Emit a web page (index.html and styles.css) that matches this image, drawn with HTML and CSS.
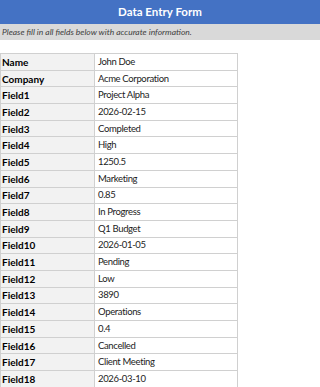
FILE: index.html
```html
<!DOCTYPE html>
<html>
<head>
<meta charset="utf-8">
<link rel="stylesheet" href="styles.css">
</head>
<body>
<div class="title">Data Entry Form</div>
<div class="subtitle">Please fill in all fields below with accurate information.</div>
<table class="form">
<tr><td class="label">Name</td><td class="value">John Doe</td></tr>
<tr><td class="label">Company</td><td class="value">Acme Corporation</td></tr>
<tr><td class="label">Field1</td><td class="value">Project Alpha</td></tr>
<tr><td class="label">Field2</td><td class="value">2026-02-15</td></tr>
<tr><td class="label">Field3</td><td class="value">Completed</td></tr>
<tr><td class="label">Field4</td><td class="value">High</td></tr>
<tr><td class="label">Field5</td><td class="value">1250.5</td></tr>
<tr><td class="label">Field6</td><td class="value">Marketing</td></tr>
<tr><td class="label">Field7</td><td class="value">0.85</td></tr>
<tr><td class="label">Field8</td><td class="value">In Progress</td></tr>
<tr><td class="label">Field9</td><td class="value">Q1 Budget</td></tr>
<tr><td class="label">Field10</td><td class="value">2026-01-05</td></tr>
<tr><td class="label">Field11</td><td class="value">Pending</td></tr>
<tr><td class="label">Field12</td><td class="value">Low</td></tr>
<tr><td class="label">Field13</td><td class="value">3890</td></tr>
<tr><td class="label">Field14</td><td class="value">Operations</td></tr>
<tr><td class="label">Field15</td><td class="value">0.4</td></tr>
<tr><td class="label">Field16</td><td class="value">Cancelled</td></tr>
<tr><td class="label">Field17</td><td class="value">Client Meeting</td></tr>
<tr><td class="label">Field18</td><td class="value">2026-03-10</td></tr>
</table>
</body>
</html>
```
FILE: styles.css
```css
html, body {
  margin: 0;
  padding: 0;
  background: #ffffff;
  font-family: Lato, "Liberation Sans", sans-serif;
  color: #000;
}
.title {
  height: 24px;
  line-height: 24px;
  background: #4472c4;
  color: #ffffff;
  font-weight: bold;
  font-size: 11.5px;
  text-align: center;
}
.subtitle {
  height: 16px;
  line-height: 16px;
  background: #d9d9d9;
  color: #404040;
  font-style: italic;
  font-size: 8.5px;
  padding-left: 2px;
}
.form {
  margin-top: 13px;
  border-collapse: collapse;
  width: 238px;
  table-layout: fixed;
  font-size: 10px;
}
.form tr {
  height: 16.7px;
}
.form td {
  border: 1px solid #d0d0d0;
  padding: 0 3px;
  line-height: 14px;
  white-space: nowrap;
}
.form .label {
  width: 89px;
  background: #f2f2f2;
  font-weight: bold;
  padding-left: 1px;
}
.form .value {
  background: #ffffff;
  color: #222;
  font-size: 9.5px;
  letter-spacing: -0.35px;
}
```
